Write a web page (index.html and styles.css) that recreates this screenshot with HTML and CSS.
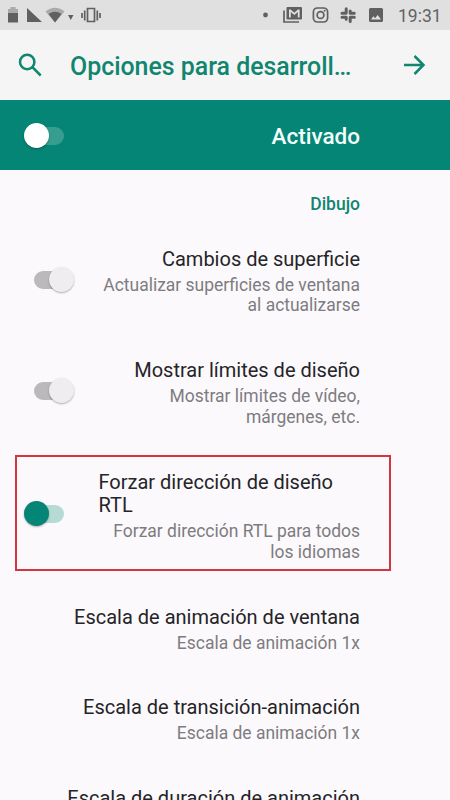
FILE: index.html
```html
<!DOCTYPE html>
<html lang="es">
<head>
<meta charset="utf-8">
<title>Opciones para desarrolladores</title>
<link rel="stylesheet" href="styles.css">
</head>
<body>
<div class="screen">
  <header class="status">
    <svg class="status-left" width="110" height="30" viewBox="0 0 110 30">
      <path class="faint" d="M8 13V9h2.500V7h5v2h2.500v4z"/>
      <path d="M8 13h10v9.500H8zM27 8l15 14H27z"/>
      <path class="faint" d="M45.500 11.500Q55 4 64.500 11.500L55 22.500z"/>
      <path d="M48.500 14q6.500-4.500 13 0L55 22.500zM68 15h5.500l-2.750 5z"/>
      <path class="line" d="M87.500 8.500h7v13h-7zM84.700 10.500v10M97.300 10.500v10M82 13v5M100 13v5"/>
    </svg>
    <div class="status-right">
      <svg width="126" height="30" viewBox="0 0 126 30">
        <circle cx="5.500" cy="15" r="2.400"/>
        <path class="line" d="M24 10.500v11.500h15"/>
        <path fill-rule="evenodd" d="M27.500 7H41q1 0 1 1v10.500q0 1-1 1H27.500q-1 0-1-1V8q0-1 1-1zM29 9.500v8h1.800V12l3.500 3 3.500-3v5.500h1.800v-8h-1.600l-3.700 3.200-3.700-3.200z"/>
        <rect class="line" x="53.400" y="8" width="14.200" height="14" rx="4"/>
        <circle class="line" cx="60.500" cy="15" r="3.400"/>
        <circle cx="64.600" cy="10.800" r="1"/>
        <g class="slack">
          <path d="M86.200 8.800v4.200M90.200 11v2M90.200 17.200v4.200M86.200 17.200v2M82 13.200h4M90.200 13.200h4.100M82 17.200h4M90.200 17.200h4.100"/>
        </g>
        <path fill-rule="evenodd" d="M110.500 8h11q1.500 0 1.500 1.500v11q0 1.500-1.500 1.500h-11q-1.500 0-1.500-1.500v-11q0-1.500 1.500-1.500zM111 19.500h10l-3.300-4.500-2.600 3.200-1.700-2z"/>
      </svg>
      <span class="clock">19:31</span>
    </div>
  </header>

  <nav class="toolbar">
    <svg class="search" width="30" height="30" viewBox="0 0 30 30"><circle cx="10.200" cy="12" r="7.200"/><path d="M15.400 17.200l8.300 8.300"/></svg>
    <h1 class="heading">Opciones para desarroll…</h1>
    <svg class="arrow" width="24" height="24" viewBox="0 0 24 24"><path d="M1 12h19M11.500 3l9 9-9 9"/></svg>
  </nav>

  <section class="master">
    <span class="switch master-switch"></span>
    <span class="master-label">Activado</span>
  </section>

  <main class="list">
    <h2 class="category">Dibujo</h2>
    <div class="row">
      <span class="switch off"></span>
      <div class="text"><div class="title">Cambios de superficie</div><div class="summary">Actualizar superficies de ventana<br>al actualizarse</div></div>
    </div>
    <div class="row">
      <span class="switch off"></span>
      <div class="text"><div class="title">Mostrar límites de diseño</div><div class="summary">Mostrar límites de vídeo,<br>márgenes, etc.</div></div>
    </div>
    <div class="row highlighted">
      <span class="switch on"></span>
      <div class="text"><div class="title wrapped">Forzar dirección de diseño<br>RTL</div><div class="summary">Forzar dirección RTL para todos<br>los idiomas</div></div>
    </div>
    <div class="row">
      <div class="text"><div class="title">Escala de animación de ventana</div><div class="summary">Escala de animación 1x</div></div>
    </div>
    <div class="row">
      <div class="text"><div class="title">Escala de transición-animación</div><div class="summary">Escala de animación 1x</div></div>
    </div>
    <div class="row">
      <div class="text"><div class="title">Escala de duración de animación</div><div class="summary">Escala de animación 1x</div></div>
    </div>
  </main>
</div>
</body>
</html>
```

FILE: styles.css
```css
*, *::before, *::after { box-sizing: border-box; }
body { margin: 0; font-family: Roboto, sans-serif; }
svg { display: block; flex: none; }
h1, h2 { margin: 0; }

.screen { width: 450px; height: 800px; overflow: hidden; background: #fbf9fc; }

.status { display: flex; justify-content: space-between; height: 30px; background: #e0e0e0; color: #636363; }
.status svg { fill: #606060; }
.status .faint { fill: #aaa; }
.status .line { fill: none; stroke: #606060; stroke-width: 1.7; }
.status .slack path { fill: none; stroke: #606060; stroke-width: 3; stroke-linecap: round; }
.status-right { display: flex; padding-right: 9px; }
.clock { width: 43px; margin-left: 12px; font-size: 17.5px; line-height: 32px; white-space: nowrap; text-align: right; }

.toolbar { display: flex; align-items: center; height: 70px; padding: 0 23px 0 17px; background: #f5f5f5; }
.toolbar svg { fill: none; stroke: #10856f; stroke-width: 2.5; }
.heading { flex: 1; margin-left: 23px; padding-top: 3px; font-size: 24.9px; font-weight: 500; line-height: 30px; color: #10856f; white-space: nowrap; }

.master { display: flex; align-items: center; justify-content: space-between; height: 70px; padding: 0 90px 0 24px; background: #048575; }
.master-label { padding-top: 1px; font-size: 22.5px; font-weight: 500; line-height: 28px; color: #f4fffc; }

.switch { position: relative; flex: none; width: 40px; height: 25px; }
.switch::before { content: ""; position: absolute; top: 4px; width: 30px; height: 18px; border-radius: 9px; }
.switch::after { content: ""; position: absolute; top: 0; width: 25px; height: 25px; border-radius: 50%; box-shadow: 0 1px 2px rgba(0, 0, 0, 0.3); }
.master-switch::before { right: 0; background: #379d90; }
.master-switch::after { left: 0; background: #fff; }
.on::before { right: 0; background: #b5dbd4; }
.on::after { left: 0; background: #048575; }
.off { margin-left: 10px; }
.off::before { left: 0; background: #bbb9bc; }
.off::after { right: 0; background: #efedf0; }

.category { height: 54px; padding: 23px 90px 0 0; font-size: 17.5px; font-weight: 500; line-height: 22px; text-align: right; color: #10856f; }
.row { position: relative; display: flex; align-items: center; padding: 24.200px 90px 19.100px 24px; }
.row .switch { margin-bottom: 5px; }
.text { margin-left: auto; text-align: right; white-space: nowrap; }
.title { font-size: 20px; line-height: 23.500px; color: #252427; }
.wrapped { width: 261.500px; text-align: left; }
.summary { margin-top: 3.500px; font-size: 17.48px; line-height: 20.300px; color: #7e7c80; }
.row:nth-of-type(-n+3) { padding-bottom: 19.500px; }
.highlighted::before { content: ""; position: absolute; left: 15px; top: 8.500px; width: 376px; height: 116px; border: 2px solid #d5353f; }
```
